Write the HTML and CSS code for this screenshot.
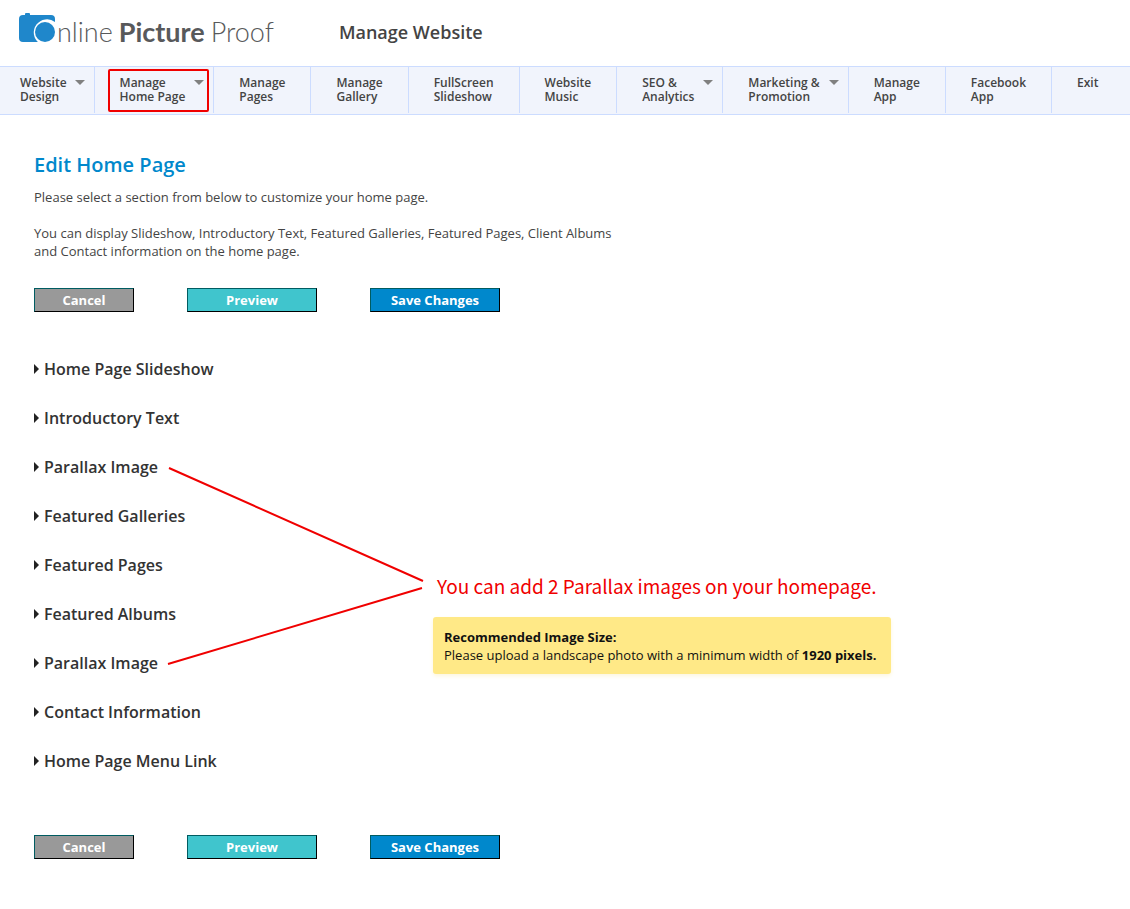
FILE: index.html
```html
<!DOCTYPE html>
<html lang="en">
<head>
  <meta charset="UTF-8">
  <meta name="viewport" content="width=device-width, initial-scale=1.0">
  <link rel="stylesheet" href="styles.css">
  <title>Manage Website</title>
</head>
<body>

  <header class="header">
    <a class="logo" href="#" aria-label="Online Picture Proof">
      <svg class="camera" width="38" height="34" viewBox="0 0 38 34">
        <path fill="#1f87cb" d="M4 2h2V1q0-1 1-1h3q1 0 1 1v1h21q4 0 4 4v19q0 4-4 4H4q-4 0-4-4V6q0-4 4-4z"/>
        <path fill="#fff" d="M36 9v21H20a12 12 0 1 1 16-21z"/>
        <circle cx="26" cy="19" r="10" fill="#1f87cb"/>
      </svg>
      <span class="light">nline</span>
      <span class="bold">Picture</span>
      <span class="light">Proof</span>
    </a>
    <h1 class="title">Manage Website</h1>
  </header>

  <nav class="nav">
    <a class="item drop" href="#">Website<br>Design</a>
    <a class="item drop active" href="#">Manage<br>Home Page</a>
    <a class="item" href="#">Manage<br>Pages</a>
    <a class="item" href="#">Manage<br>Gallery</a>
    <a class="item" href="#">FullScreen<br>Slideshow</a>
    <a class="item" href="#">Website<br>Music</a>
    <a class="item drop" href="#">SEO &amp;<br>Analytics</a>
    <a class="item drop" href="#">Marketing &amp;<br>Promotion</a>
    <a class="item" href="#">Manage<br>App</a>
    <a class="item" href="#">Facebook<br>App</a>
    <a class="item" href="#">Exit</a>
  </nav>

  <main class="content">
    <h2>Edit Home Page</h2>
    <p>Please select a section from below to customize your home page.</p>
    <p>You can display Slideshow, Introductory Text, Featured Galleries, Featured Pages, Client Albums<br>
    and Contact information on the home page.</p>

    <div class="buttons">
      <button class="btn cancel" type="button">Cancel</button>
      <button class="btn preview" type="button">Preview</button>
      <button class="btn save" type="button">Save Changes</button>
    </div>

    <div class="middle">
      <div class="sections">
        <details><summary>Home Page Slideshow</summary></details>
        <details><summary>Introductory Text</summary></details>
        <details><summary>Parallax Image</summary></details>
        <details><summary>Featured Galleries</summary></details>
        <details><summary>Featured Pages</summary></details>
        <details><summary>Featured Albums</summary></details>
        <details><summary>Parallax Image</summary></details>
        <details><summary>Contact Information</summary></details>
        <details><summary>Home Page Menu Link</summary></details>
      </div>

      <svg class="lines" width="260" height="200" viewBox="0 0 260 200">
        <path d="M2 2L256 115M1 198L255 122" fill="none" stroke="#f00000" stroke-width="2"/>
      </svg>

      <div class="note">
        <div class="tip">You can add 2 Parallax images on your homepage.</div>
        <div class="size">
          <b>Recommended Image Size:</b><br>
          Please upload a landscape photo with a minimum width of <b>1920 pixels.</b>
        </div>
      </div>
    </div>

    <div class="buttons">
      <button class="btn cancel" type="button">Cancel</button>
      <button class="btn preview" type="button">Preview</button>
      <button class="btn save" type="button">Save Changes</button>
    </div>
  </main>

</body>
</html>
```

FILE: styles.css
```css
*,
*::before,
*::after {
  margin: 0;
  padding: 0;
  box-sizing: border-box;
}

body {
  background: #fff;
  color: #444;
  font-family: 'Open Sans', 'Noto Sans', sans-serif;
  font-size: 13px;
  line-height: 18px;
}

.header {
  display: flex;
  align-items: center;
  gap: 65px;
  height: 66px;
  padding: 0 0 2px 19px;
}

.logo {
  display: flex;
  align-items: center;
  gap: 6px;
  color: #58595b;
  font-family: Lato, sans-serif;
  font-size: 27px;
  line-height: 34px;
  text-decoration: none;
}

.camera {
  margin: 0 -6px 4px 0;
}

.light {
  font-weight: 300;
}

.bold {
  font-weight: 700;
}

.title {
  font-size: 18px;
  font-weight: 600;
}

.nav {
  display: flex;
  height: 49px;
  background: #f1f4fc;
  border-top: 1px solid #ccdcff;
  border-bottom: 1px solid #ccdcff;
}

.item {
  position: relative;
  height: 46px;
  padding: 9px 25px 0;
  border-right: 1px solid #ccdcff;
  color: #444;
  font-size: 12px;
  font-weight: 600;
  line-height: 14px;
  text-decoration: none;
  white-space: nowrap;
}

.drop {
  padding-right: 28px;
}

.item:first-child {
  padding-left: 20px;
  padding-right: 27px;
}

.item:last-child {
  border-right: none;
}

.drop::after {
  content: '';
  position: absolute;
  top: 13px;
  right: 9px;
  border: 5px solid transparent;
  border-top-color: #808080;
  border-bottom: none;
}

.active::before {
  content: '';
  position: absolute;
  top: 2px;
  left: 13px;
  right: 4px;
  height: 43px;
  border: 2px solid #f00000;
  border-radius: 2px;
}

.content {
  padding: 36px 34px;
}

h2 {
  margin-bottom: 9px;
  color: #0088cc;
  font-size: 20px;
  font-weight: 600;
  line-height: 28px;
}

.content p {
  margin-bottom: 18px;
}

.buttons {
  display: flex;
  margin-top: 28px;
}

.btn {
  width: 130px;
  height: 24px;
  margin-right: 53px;
  border: 1px solid;
  border-color: #005c61 #000 #000 #005c61;
  color: #fff;
  font-family: inherit;
  font-size: 13px;
  font-weight: 700;
  line-height: 18px;
  cursor: pointer;
}

.cancel {
  width: 100px;
  background: #999;
}

.preview {
  background: #40c5cd;
}

.save {
  background: #0088cc;
}

.middle {
  position: relative;
  display: flex;
  align-items: center;
  margin: 32px 0 50px;
}

.sections {
  flex: 0 0 399px;
}

summary {
  display: flex;
  align-items: center;
  gap: 5px;
  height: 49px;
  color: #333;
  font-size: 16px;
  font-weight: 600;
  list-style: none;
  cursor: pointer;
}

summary::before {
  content: '';
  border: 5px solid transparent;
  border-left-color: #222;
  border-right: none;
}

.lines {
  position: absolute;
  top: 122px;
  left: 133px;
  pointer-events: none;
}

.note {
  padding-top: 118px;
}

.tip {
  margin-bottom: 18px;
  padding-left: 4px;
  color: #f00000;
  font-family: 'Noto Sans CJK SC', 'Noto Sans', sans-serif;
  font-size: 19px;
  line-height: 26px;
}

.size {
  padding: 11px 15px 10px 11px;
  background: #ffe987;
  border-radius: 3px;
  box-shadow: 0 2px 4px #fdf6dc;
  color: #111;
}
```
